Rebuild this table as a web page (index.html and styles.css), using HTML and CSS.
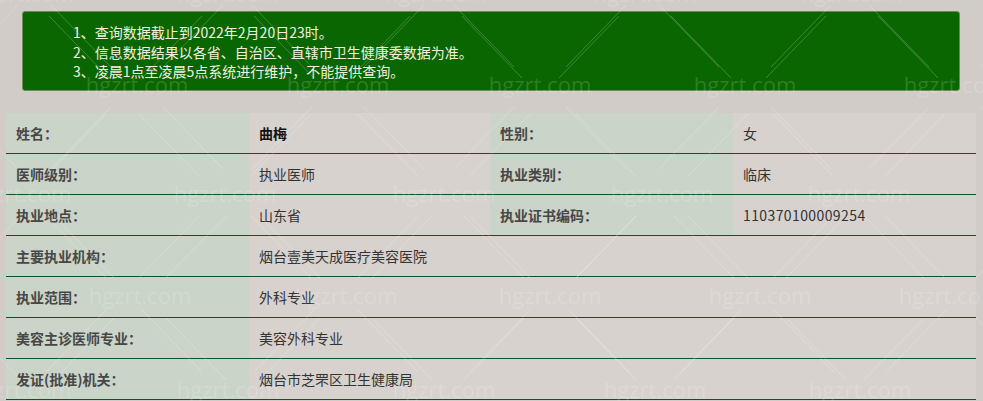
FILE: index.html
```html
<!DOCTYPE html>
<html lang="zh-CN">
<head>
<meta charset="utf-8">
<title>医师执业信息查询</title>
<link rel="stylesheet" href="styles.css">
</head>
<body>
<div class="page">
  <div class="notice">
    <p>1、查询数据截止到2022年2月20日23时。</p>
    <p>2、信息数据结果以各省、自治区、直辖市卫生健康委数据为准。</p>
    <p>3、凌晨1点至凌晨5点系统进行维护，不能提供查询。</p>
  </div>

  <div class="info">
    <div class="cell label">姓名：</div>
    <div class="cell value strong">曲梅</div>
    <div class="cell label">性别：</div>
    <div class="cell value">女</div>

    <div class="cell label">医师级别：</div>
    <div class="cell value">执业医师</div>
    <div class="cell label">执业类别：</div>
    <div class="cell value">临床</div>

    <div class="cell label">执业地点：</div>
    <div class="cell value">山东省</div>
    <div class="cell label">执业证书编码：</div>
    <div class="cell value num">110370100009254</div>

    <div class="cell label">主要执业机构：</div>
    <div class="cell value wide">烟台壹美天成医疗美容医院</div>

    <div class="cell label">执业范围：</div>
    <div class="cell value wide">外科专业</div>

    <div class="cell label">美容主诊医师专业：</div>
    <div class="cell value wide">美容外科专业</div>

    <div class="cell label">发证(批准)机关：</div>
    <div class="cell value wide">烟台市芝罘区卫生健康局</div>
  </div>

  <svg class="watermark" width="983" height="401" viewBox="0 0 983 401" aria-hidden="true">
    <defs>
      <g id="wm">
        <line x1="-86" y1="-82" x2="-26" y2="-20"></line>
        <line x1="26" y1="-20" x2="86" y2="-82"></line>
        <line x1="-86" y1="82" x2="-26" y2="20"></line>
        <line x1="26" y1="20" x2="86" y2="82"></line>
        <text x="0" y="6" text-anchor="middle">hgzrt.com</text>
      </g>
    </defs>
    <use href="#wm" x="23" y="-4"></use>
    <use href="#wm" x="228" y="-4"></use>
    <use href="#wm" x="436" y="-4"></use>
    <use href="#wm" x="645" y="-4"></use>
    <use href="#wm" x="852" y="-4"></use>

    <use href="#wm" x="-68" y="87"></use>
    <use href="#wm" x="137" y="87"></use>
    <use href="#wm" x="338" y="87"></use>
    <use href="#wm" x="540" y="87"></use>
    <use href="#wm" x="745" y="87"></use>
    <use href="#wm" x="955" y="87"></use>

    <use href="#wm" x="20" y="196"></use>
    <use href="#wm" x="225" y="196"></use>
    <use href="#wm" x="444" y="196"></use>
    <use href="#wm" x="662" y="196"></use>
    <use href="#wm" x="859" y="196"></use>

    <use href="#wm" x="-65" y="298"></use>
    <use href="#wm" x="140" y="298"></use>
    <use href="#wm" x="346" y="298"></use>
    <use href="#wm" x="550" y="298"></use>
    <use href="#wm" x="760" y="298"></use>
    <use href="#wm" x="950" y="298"></use>

    <use href="#wm" x="20" y="392"></use>
    <use href="#wm" x="228" y="392"></use>
    <use href="#wm" x="444" y="392"></use>
    <use href="#wm" x="655" y="392"></use>
    <use href="#wm" x="860" y="392"></use>
  </svg>
</div>
</body>
</html>
```

FILE: styles.css
```css
* {
  box-sizing: border-box;
}

html, body {
  margin: 0;
  padding: 0;
}

body {
  background: #d1ccc8;
  font-family: "Noto Sans CJK SC", "Noto Sans", sans-serif;
  font-size: 14px;
  color: #333;
}

.page {
  position: relative;
  width: 983px;
  height: 401px;
  overflow: hidden;
  padding-top: 11px;
}

.notice {
  margin: 0 23px 0 22px;
  height: 80px;
  background: #0a6600;
  border: 1px solid #6f8a5a;
  border-radius: 3px;
  padding: 11px 0 0 50px;
  color: #f1f1e2;
  line-height: 19.5px;
}

.notice p {
  margin: 0;
}

.info {
  display: grid;
  grid-template-columns: 243px 241px 243px 243px;
  margin: 22px 7px 0 6px;
  background: #d7d2ce;
}

.cell {
  height: 41px;
  display: flex;
  align-items: center;
  padding: 0 0 1px 10px;
  border-bottom: 1px solid #0b5526;
  white-space: nowrap;
}

.label {
  background: #cbd4c9;
  font-weight: bold;
  color: #474747;
}

.value {
  color: #333;
  background: #d7d2ce;
}

.value.strong {
  font-weight: bold;
  color: #111;
}

.value.num {
  letter-spacing: 0.4px;
}

.value.wide {
  grid-column: span 3;
}

.watermark {
  position: absolute;
  top: 0;
  left: 0;
  pointer-events: none;
}

.watermark line {
  stroke: rgba(255, 255, 255, 0.22);
  stroke-width: 1;
}

.watermark text {
  font-family: "Open Sans", "Noto Sans", sans-serif;
  font-size: 22px;
  fill: rgba(255, 255, 255, 0.16);
}
```
